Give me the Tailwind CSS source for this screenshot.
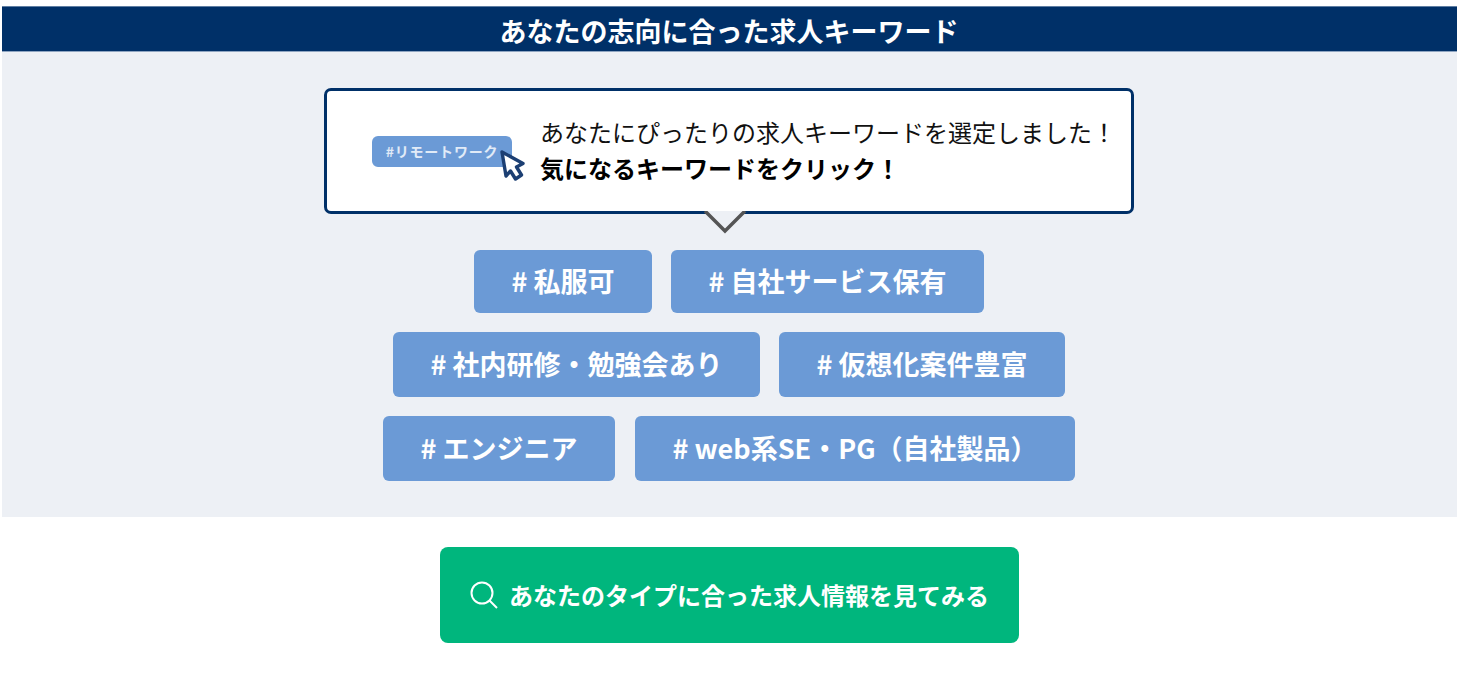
<!DOCTYPE html>
<html lang="ja">
<head>
    <meta charset="UTF-8">
    <title>求人キーワード</title>
    <script src="https://cdn.jsdelivr.net/npm/@tailwindcss/browser@4"></script>
</head>
<body class="bg-white font-['Noto_Sans_CJK_JP','Noto_Sans',sans-serif]">
    <div class="ml-[2px] w-[1455px] pt-[6px]">
        <h2 class="h-[46px] bg-[#003068] border-t border-t-[#5f7ea3] border-b border-b-[#8fa5c1] text-white text-[27px] font-bold leading-[47px] text-center pr-[1px]">あなたの志向に合った求人キーワード</h2>

        <section class="h-[465px] bg-[#edf0f5] pt-[36px]">
            <div class="relative ml-[322px] w-[810px] h-[126px] bg-white border-[3px] border-[#003068] rounded-[7px] flex items-center pl-[45px]">
                <div class="relative w-[168px] h-[36px] shrink-0 mt-[6px]">
                    <div class="w-[140px] h-[31px] bg-[#6b9ad6] rounded-[6px] text-white/80 text-[14px] font-bold leading-[31px] text-center tracking-[0.8px]">#リモートワーク</div>
                    <svg class="absolute left-[126px] top-[12px]" width="28" height="34" viewBox="0 0 28 34">
                        <path d="M4 4 L25 15.5 L18.5 19 L23.5 27 L17.5 31 L12.5 23 L8 28 Z" fill="white" stroke="#1c3f73" stroke-width="3.4" stroke-linejoin="round"/>
                    </svg>
                </div>
                <div class="text-[#111111] text-[24px] leading-[36px] -mt-[2px]">
                    <p>あなたにぴったりの求人キーワードを選定しました！</p>
                    <p class="font-bold text-black">気になるキーワードをクリック！</p>
                </div>
                <svg class="absolute left-[376px] top-[120px]" width="44" height="24" viewBox="0 0 44 24">
                    <path d="M2 0 L22 20 L42 0 Z" fill="#edf0f5"/>
                    <path d="M2 0 L22 20 L42 0" fill="none" stroke="#555555" stroke-width="3.5"/>
                </svg>
            </div>

            <div class="mt-[36px] flex flex-col items-center gap-[19px] text-white text-[27px] font-bold pr-[1px]">
                <div class="flex gap-[19px]">
                    <a class="w-[178px] h-[63px] bg-[#6b9ad6] rounded-[6px] flex items-center justify-center">#&nbsp;私服可</a>
                    <a class="w-[313px] h-[63px] bg-[#6b9ad6] rounded-[6px] flex items-center justify-center"># 自社サービス保有</a>
                </div>
                <div class="flex gap-[19px]">
                    <a class="w-[367px] h-[65px] bg-[#6b9ad6] rounded-[6px] flex items-center justify-center"># 社内研修・勉強会あり</a>
                    <a class="w-[286px] h-[65px] bg-[#6b9ad6] rounded-[6px] flex items-center justify-center"># 仮想化案件豊富</a>
                </div>
                <div class="flex gap-[20px]">
                    <a class="w-[232px] h-[65px] bg-[#6b9ad6] rounded-[6px] flex items-center justify-center"># エンジニア</a>
                    <a class="w-[440px] h-[65px] bg-[#6b9ad6] rounded-[6px] flex items-center justify-center"># web系SE・PG（自社製品）</a>
                </div>
            </div>
        </section>

        <div class="mt-[30px] ml-[438px] w-[579px] h-[96px] bg-[#00b67d] rounded-[8px] flex items-center justify-center gap-[11px] text-white text-[24px] font-bold">
            <svg width="28" height="28" viewBox="0 0 28 28" fill="none" stroke="white" stroke-width="2">
                <circle cx="12" cy="12" r="10.5"/>
                <path d="M19.5 19.5 L27 27"/>
            </svg>
            <span class="-mt-[1px]">あなたのタイプに合った求人情報を見てみる</span>
        </div>
    </div>
</body>
</html>
